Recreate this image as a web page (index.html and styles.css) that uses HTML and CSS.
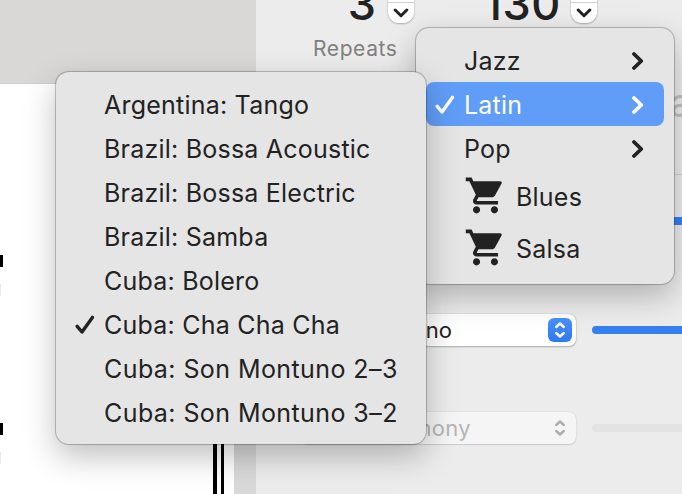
FILE: index.html
```html
<!DOCTYPE html>
<html lang="en">

<head>
    <meta charset="UTF-8">
    <meta name="viewport" content="width=device-width, initial-scale=1">
    <title>Style</title>
    <link rel="stylesheet" href="styles.css">
</head>

<body>
    <svg class="defs" width="0" height="0">
        <symbol id="check" viewBox="0 0 20 20">
            <path d="M2.2 11.4 7 17 17.4 2.4" />
        </symbol>
        <symbol id="chevron" viewBox="0 0 12 20">
            <path d="M2 3 9.2 10 2 17" />
        </symbol>
        <symbol id="down" viewBox="0 0 16 10">
            <path d="M2.2 2 8 7.7 13.8 2" />
        </symbol>
        <symbol id="updown" viewBox="0 0 24 24">
            <path d="M8.2 9 12 5.5 15.8 9M8.2 15 12 18.5 15.8 15" />
        </symbol>
        <symbol id="cart" viewBox="0 0 24 24">
            <path d="M7 18c-1.1 0-1.99.9-1.99 2S5.9 22 7 22s2-.9 2-2-.9-2-2-2zM1 2v2h2l3.6 7.59-1.35 2.45c-.16.28-.25.61-.25.96 0 1.1.9 2 2 2h12v-2H7.42c-.14 0-.25-.11-.25-.25l.03-.12.9-1.63h7.45c.75 0 1.41-.41 1.75-1.03l3.58-6.49A1 1 0 0 0 20.25 4H5.21l-.94-2H1zm16 16c-1.1 0-1.99.9-1.99 2s.89 2 1.99 2 2-.9 2-2-.9-2-2-2z" />
        </symbol>
    </svg>

    <main>
        <section class="score">
            <header class="score-header"></header>
            <div class="sheet">
                <div class="staff">
                    <i class="note"></i>
                    <i class="rest"></i>
                    <i class="note"></i>
                    <i class="rest"></i>
                </div>
                <div class="barlines"></div>
            </div>
        </section>

        <section class="panel">
            <div class="numbers">
                <span class="value repeats">3</span>
                <span class="stepper"><svg><use href="#down" /></svg></span>
                <span class="value tempo">130</span>
                <span class="stepper"><svg><use href="#down" /></svg></span>
            </div>
            <div class="caption">Repeats</div>
            <div class="style-name">a</div>
            <hr>
            <div class="volume"><div class="slider"></div></div>
            <div class="track">
                <div class="select">
                    <span class="name">Piano</span>
                    <svg class="arrows"><use href="#updown" /></svg>
                </div>
                <div class="slider"></div>
            </div>
            <div class="track disabled">
                <div class="select">
                    <span class="name">Harmony</span>
                    <svg class="arrows"><use href="#updown" /></svg>
                </div>
                <div class="slider"></div>
            </div>
        </section>
    </main>

    <ul class="menu genres">
        <li>Jazz<svg class="chevron"><use href="#chevron" /></svg></li>
        <li class="active"><svg class="check"><use href="#check" /></svg>Latin<svg class="chevron"><use href="#chevron" /></svg></li>
        <li>Pop<svg class="chevron"><use href="#chevron" /></svg></li>
        <li class="shop"><svg class="cart"><use href="#cart" /></svg>Blues</li>
        <li class="shop"><svg class="cart"><use href="#cart" /></svg>Salsa</li>
    </ul>

    <ul class="menu styles">
        <li>Argentina: Tango</li>
        <li>Brazil: Bossa Acoustic</li>
        <li>Brazil: Bossa Electric</li>
        <li>Brazil: Samba</li>
        <li>Cuba: Bolero</li>
        <li><svg class="check"><use href="#check" /></svg>Cuba: Cha Cha Cha</li>
        <li class="wide">Cuba: Son Montuno 2–3</li>
        <li class="wide">Cuba: Son Montuno 3–2</li>
    </ul>
</body>

</html>
```
FILE: styles.css
```css
html,
body {
    margin: 0;
    padding: 0;
    height: 100%;
    overflow: hidden;
    font-family: Inter, 'Liberation Sans', sans-serif;
    color: #222;
}

body {
    position: relative;
}

svg {
    display: block;
    flex: none;
    fill: none;
    stroke: currentColor;
    stroke-width: 3;
    stroke-linecap: round;
    stroke-linejoin: round;
}

.defs {
    position: absolute;
}

main {
    display: flex;
    width: 682px;
    height: 494px;
    overflow: hidden;
}

/* score */

.score {
    display: flex;
    flex-direction: column;
    flex: none;
    width: 256px;
    background-color: #d9d9d9;
}

.score-header {
    flex: none;
    height: 83px;
    background-color: #d9d8d6;
    border-bottom: 1px solid #cfcfcd;
}

.sheet {
    flex: none;
    display: flex;
    justify-content: space-between;
    width: 224px;
    height: 410px;
    padding-right: 10px;
    background-color: #fff;
}

.staff {
    padding-top: 171px;
}

.note,
.rest {
    display: block;
}

.note {
    width: 3px;
    height: 12px;
    margin-bottom: 17px;
    background-color: #000;
}

.rest {
    width: 1px;
    height: 12px;
    margin-bottom: 127px;
    background-color: #e8e8e8;
}

.rest:last-child {
    margin-bottom: 0;
}

.barlines {
    width: 4px;
    border: solid #000;
    border-width: 0 3px 0 4px;
}

/* panel */

.panel {
    width: 426px;
    background-color: #ececec;
    overflow: hidden;
}

.numbers {
    display: flex;
    align-items: flex-end;
    height: 24px;
}

.value {
    padding-bottom: 4px;
    font-size: 45px;
    font-weight: 500;
    line-height: 32px;
    text-align: right;
}

.repeats {
    width: 120px;
}

.tempo {
    width: 147px;
    margin-right: -2px;
    letter-spacing: 0.6px;
}

.stepper {
    display: flex;
    align-items: flex-end;
    justify-content: center;
    box-sizing: border-box;
    width: 26px;
    height: 50px;
    margin: 0 0 1px 12px;
    padding-bottom: 5px;
    border-radius: 11px;
    background: linear-gradient(#fff 29px, #d2d2d2 29px, #d2d2d2 30px, #fff 30px);
    box-shadow: 0 0 1px rgba(0, 0, 0, 0.3), 0 1px 2px rgba(0, 0, 0, 0.25);
}

.stepper svg {
    width: 16px;
    height: 10px;
}

.caption {
    margin-left: 57px;
    padding-top: 12px;
    font-size: 21px;
    line-height: 26px;
    letter-spacing: 0.6px;
    color: #808080;
}

.style-name {
    height: 60px;
    margin: 20px 0 0 414px;
    font-size: 38px;
    line-height: 40px;
    color: #c0c0c0;
}

hr {
    height: 1px;
    margin: 32px 0 42px 40px;
    border: 0;
    background-color: #d0d0d0;
}

.volume {
    display: flex;
    height: 8px;
    margin-bottom: 89px;
    padding-left: 336px;
}

.track {
    display: flex;
    align-items: center;
    gap: 16px;
    height: 32px;
    margin-bottom: 66px;
    padding-left: 44px;
}

.select {
    display: flex;
    align-items: center;
    box-sizing: border-box;
    width: 276px;
    height: 32px;
    padding-right: 4px;
    border-radius: 7px;
    background-color: #fff;
    box-shadow: 0 0 1px rgba(0, 0, 0, 0.4), 0 1px 2px rgba(0, 0, 0, 0.25);
    font-size: 22px;
}

.select .name {
    width: 152px;
    text-align: right;
}

.disabled .name {
    width: 171px;
    letter-spacing: 0.3px;
}

.arrows {
    width: 24px;
    height: 24px;
    margin-left: auto;
    border-radius: 6px;
    background: linear-gradient(#4a91f8, #2f78ef);
    color: #fff;
    stroke-width: 2.4;
}

.slider {
    flex: 1;
    height: 8px;
    border-radius: 4px 0 0 4px;
    background-color: #3580f0;
}

.disabled .select {
    background-color: #f5f5f5;
    box-shadow: 0 0 2px rgba(0, 0, 0, 0.15), 0 1px 1px rgba(0, 0, 0, 0.1);
    color: #b5b5b5;
}

.disabled .arrows {
    background: none;
    color: #adadad;
}

.disabled .slider {
    background-color: #e3e3e3;
}

/* menus */

.menu {
    position: absolute;
    box-sizing: border-box;
    margin: 0;
    padding: 10px;
    list-style: none;
    border-radius: 13px;
    background-color: #e5e5e5;
    box-shadow: 0 0 0 1px rgba(0, 0, 0, 0.16), 0 0 2px rgba(0, 0, 0, 0.25), 0 12px 32px rgba(0, 0, 0, 0.26);
    font-size: 25px;
    letter-spacing: 0.22px;
}

.menu li {
    display: flex;
    align-items: center;
    box-sizing: border-box;
    height: 44px;
    padding: 2px 0 0 38px;
    border-radius: 8px;
    white-space: nowrap;
}

.menu .wide {
    letter-spacing: 0.42px;
}

.check {
    width: 20px;
    height: 20px;
    margin: 0 9px 0 -29px;
    stroke-width: 3.4;
}

.genres {
    top: 28px;
    left: 416px;
    width: 258px;
    height: 256px;
}

.genres .active {
    background-color: #609df8;
    color: #fff;
}

.menu .shop {
    height: 52px;
}

.chevron {
    width: 12px;
    height: 20px;
    margin: 0 20px 0 auto;
    stroke-width: 3.8;
}

.cart {
    width: 43px;
    height: 43px;
    margin: -3px 9px 0 0;
    fill: currentColor;
    stroke: none;
}

.styles {
    top: 72px;
    left: 56px;
    width: 370px;
    height: 372px;
}
```
